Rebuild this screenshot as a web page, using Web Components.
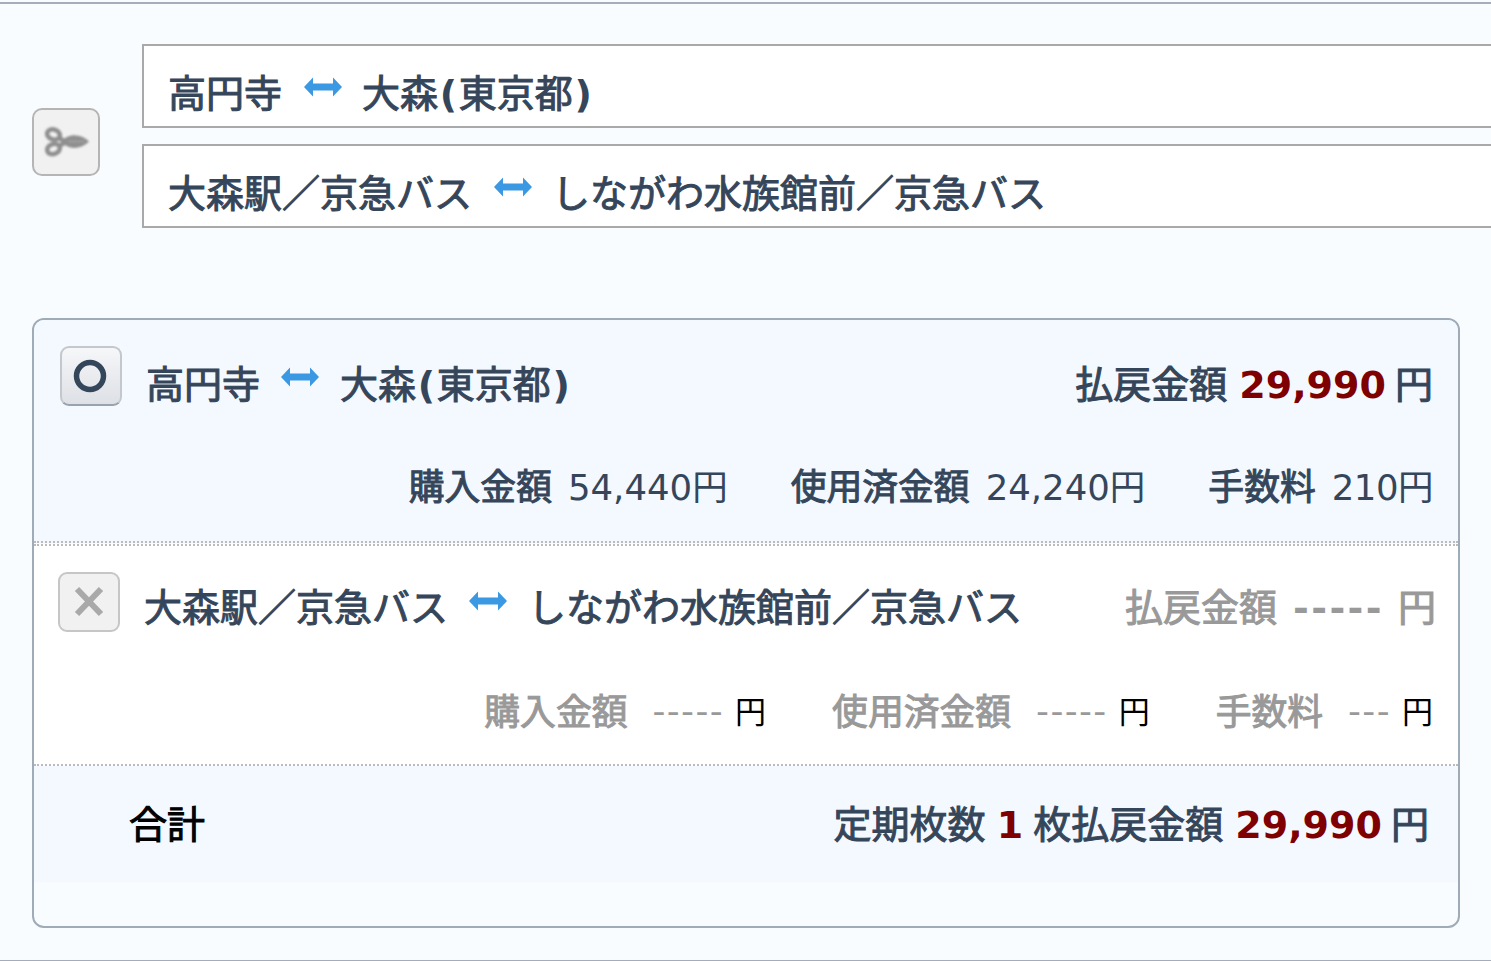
<!DOCTYPE html>
<html lang="ja">
<head>
<meta charset="utf-8">
<title>払戻</title>
<style>
    html, body { margin: 0; height: 100%; overflow: hidden; }
    body {
        background: #f9fcff;
        color: #36465a;
        font-family: "DejaVu Sans", "Noto Sans CJK JP", sans-serif;
    }
</style>
</head>
<body>
<refund-page>
    <route-select slot="routes">
        <route-box from="高円寺" to="大森" pref="東京都"></route-box>
        <route-box from="大森駅／京急バス" to="しながわ水族館前／京急バス"></route-box>
    </route-select>
    <refund-table slot="table">
        <refund-row from="高円寺" to="大森" pref="東京都" state="ok" amount="29,990"
            bought="54,440" used="24,240" fee="210"></refund-row>
        <refund-row from="大森駅／京急バス" to="しながわ水族館前／京急バス" state="ng"></refund-row>
        <refund-total count="1" amount="29,990"></refund-total>
    </refund-table>
</refund-page>

<script>
const arrowSvg = `<svg class="arrow" width="38" height="22" viewBox="0 0 38 22"><path fill="#3b98e2" d="M0 11 9 1.500V7.500H29V1.500L38 11 29 20.500V14.500H9V20.500Z"/></svg>`;

// shared route name markup: kanji + optional bold (prefecture)
function routeName(name, pref) {
    if (!pref) return name;
    return `${name}<b class="paren">(</b>${pref}<b class="paren">)</b>`;
}

class RefundPage extends HTMLElement {
    connectedCallback() {
        this.attachShadow({ mode: 'open' });
        this.shadowRoot.innerHTML = `
            <style>
                :host {
                    display: block;
                    box-sizing: border-box;
                    height: 961px;
                    border-top: 2px solid #a4adb9;
                    margin-top: 2px;
                    position: relative;
                }
                .bottom {
                    position: absolute;
                    left: 0; right: 0; bottom: 2px;
                    height: 1px;
                    background: #a4adb9;
                }
                .wrap { padding: 40px 0 0 32px; }
            </style>
            <div class="wrap">
                <slot name="routes"></slot>
                <slot name="table"></slot>
            </div>
            <div class="bottom"></div>
        `;
    }
}

class RouteSelect extends HTMLElement {
    connectedCallback() {
        this.attachShadow({ mode: 'open' });
        this.shadowRoot.innerHTML = `
            <style>
                :host { display: flex; align-items: center; gap: 42px; }
                .btn {
                    box-sizing: border-box;
                    width: 68px;
                    height: 68px;
                    flex: none;
                    margin-top: 12px;
                    border: 2px solid #b5b5b5;
                    border-radius: 10px;
                    background: #f1f1f1;
                    display: flex;
                    align-items: center;
                    justify-content: center;
                }
                .btn svg { filter: blur(0.8px); }
                .list {
                    flex: 1;
                    display: flex;
                    flex-direction: column;
                    gap: 16px;
                    margin-right: -10px;
                }
            </style>
            <div class="btn">
                <svg width="46" height="30" viewBox="0 0 46 30" fill="none">
                    <g stroke="#8f8f8f" stroke-width="4.500">
                        <ellipse cx="10.500" cy="7.500" rx="6.500" ry="5" transform="rotate(20 10.500 7.500)"/>
                        <ellipse cx="10.500" cy="22" rx="6.500" ry="5" transform="rotate(-20 10.500 22)"/>
                        <path d="M16 11 22 14.500M16 19 22 15.500"/>
                    </g>
                    <path fill="#8f8f8f" d="M19 14.500C24 6 38 6 46 14.500 38 23 24 23 19 14.500Z"/>
                    <path stroke="#aaa" stroke-width="1" d="M25 14.500H42"/>
                </svg>
            </div>
            <div class="list"><slot></slot></div>
        `;
    }
}

class RouteBox extends HTMLElement {
    connectedCallback() {
        const from = this.getAttribute('from');
        const to = this.getAttribute('to');
        const pref = this.getAttribute('pref');
        this.attachShadow({ mode: 'open' });
        this.shadowRoot.innerHTML = `
            <style>
                :host {
                    display: flex;
                    box-sizing: border-box;
                    height: 84px;
                    align-items: flex-end;
                    background: #fff;
                    border: 2px solid #a9a9a9;
                    padding: 0 0 5px 24px;
                    font-size: 38px;
                    font-weight: 400;
                    -webkit-text-stroke: 1px currentColor;
                    line-height: 54px;
                    white-space: nowrap;
                }
                .arrow { margin: 0 20px 0 22px; position: relative; top: -23px; }
                b { font-weight: 700; -webkit-text-stroke: 0; }
                .paren { padding: 0 1.700px; }
            </style>
            <span>${from}</span>${arrowSvg}<span>${routeName(to, pref)}</span>
        `;
    }
}

class RefundTable extends HTMLElement {
    connectedCallback() {
        this.attachShadow({ mode: 'open' });
        this.shadowRoot.innerHTML = `
            <style>
                :host {
                    display: block;
                    box-sizing: border-box;
                    width: 1428px;
                    height: 610px;
                    margin-top: 90px;
                    border: 2px solid #a0abb8;
                    border-radius: 12px;
                    overflow: hidden;
                }
            </style>
            <slot></slot>
        `;
    }
}

class RefundRow extends HTMLElement {
    connectedCallback() {
        const ok = this.getAttribute('state') === 'ok';
        const from = this.getAttribute('from');
        const to = this.getAttribute('to');
        const pref = this.getAttribute('pref');
        const amount = this.getAttribute('amount');
        const mark = ok
            ? `<svg width="36" height="36" viewBox="0 0 36 36"><circle cx="17" cy="18" r="13.500" fill="none" stroke="#34465a" stroke-width="5.500"/></svg>`
            : `<svg width="36" height="36" viewBox="0 0 36 36"><path d="M6 5 30 30M30 5 6 30" stroke="#a9a9a9" stroke-width="6"/></svg>`;
        const money = (label, val, dash) => ok
            ? `<span class="item"><span class="lbl">${label}</span><span class="val">${val}円</span></span>`
            : `<span class="item"><span class="lbl">${label}</span><span class="dash">${dash}</span><span class="yen">円</span></span>`;
        this.attachShadow({ mode: 'open' });
        this.shadowRoot.innerHTML = `
            <style>
                :host {
                    display: block;
                    box-sizing: border-box;
                    white-space: nowrap;
                }
                :host([state="ok"]) {
                    height: 223px;
                    background: #f3f9ff;
                    padding: 26px 25px 0 26px;
                    border-bottom: 2px dotted #bbb;
                }
                :host([state="ng"]) {
                    height: 222px;
                    margin-top: 1px;
                    background: #fff;
                    padding: 26px 22px 0 24px;
                    border-top: 2px dotted #bbb;
                    border-bottom: 2px dotted #bbb;
                }
                .top { display: flex; align-items: flex-start; }
                .mark {
                    box-sizing: border-box;
                    width: 62px;
                    height: 60px;
                    flex: none;
                    border-radius: 9px;
                    display: flex;
                    align-items: center;
                    justify-content: center;
                    margin-right: 24px;
                }
                :host([state="ok"]) .mark {
                    background: linear-gradient(#f6f7f9, #dde0e5);
                    border: 2px solid #c3c8cf;
                    border-bottom-color: #9aa2ad;
                }
                :host([state="ng"]) .mark {
                    background: #f1f1f1;
                    border: 2px solid #c6c6c6;
                }
                .name, .pay {
                    font-size: 38px;
                    -webkit-text-stroke: 1px currentColor;
                    line-height: 54px;
                    margin-top: 12px;
                }
                :host([state="ng"]) .name, :host([state="ng"]) .pay { margin-top: 9px; }
                .name { display: flex; flex: 1; }
                .arrow { margin: 0 21px; position: relative; top: 8px; }
                :host([state="ng"]) .arrow { top: 9px; }
                b { font-weight: 700; -webkit-text-stroke: 0; }
                .paren { padding: 0 1.700px; }
                .pay b { color: #7f0000; margin-right: -3px; }
                :host([state="ng"]) .pay { color: #999; }
                :host([state="ng"]) .pay b { color: #999; letter-spacing: 2.400px; margin: 0 2px 0 4px; }
                .detail {
                    display: flex;
                    justify-content: flex-end;
                    gap: 63px;
                    margin-top: 49px;
                    font-size: 35.800px;
                    line-height: 54px;
                }
                .lbl { -webkit-text-stroke: 1px currentColor; }
                .val { margin-left: 16px; font-size: 35.500px; }
                .item:last-child .val { letter-spacing: -0.500px; }
                :host([state="ng"]) .detail { gap: 66px; margin-right: 3px; }
                :host([state="ng"]) .lbl { color: #999; vertical-align: -1.500px; }
                .dash { color: #999; margin-left: 25px; letter-spacing: 1.400px; }
                .yen { color: #000; margin-left: 11px; font-size: 31px; }
            </style>
            <div class="top">
                <div class="mark">${mark}</div>
                <div class="name"><span>${from}</span>${arrowSvg}<span>${routeName(to, pref)}</span></div>
                <div class="pay">払戻金額 <b>${ok ? amount : '-----'}</b> 円</div>
            </div>
            <div class="detail">
                ${money('購入金額', this.getAttribute('bought'), '-----')}
                ${money('使用済金額', this.getAttribute('used'), '-----')}
                ${money('手数料', this.getAttribute('fee'), '---')}
            </div>
        `;
    }
}

class RefundTotal extends HTMLElement {
    connectedCallback() {
        this.attachShadow({ mode: 'open' });
        this.shadowRoot.innerHTML = `
            <style>
                :host {
                    display: flex;
                    box-sizing: border-box;
                    height: 116px;
                    align-items: center;
                    justify-content: space-between;
                    padding: 2px 29px 0 95px;
                    background: #f3f9ff;
                    font-size: 38px;
                    -webkit-text-stroke: 1px currentColor;
                    line-height: 54px;
                    white-space: nowrap;
                }
                .t { color: #000; }
                b { color: #7f0000; font-weight: 700; -webkit-text-stroke: 0; }
                .count { margin: 0 -2px 0 -1px; }
                .sum { margin-right: -3px; }
            </style>
            <span class="t">合計</span>
            <span>定期枚数 <b class="count">${this.getAttribute('count')}</b> 枚払戻金額 <b class="sum">${this.getAttribute('amount')}</b> 円</span>
        `;
    }
}

customElements.define('refund-page', RefundPage);
customElements.define('route-select', RouteSelect);
customElements.define('route-box', RouteBox);
customElements.define('refund-table', RefundTable);
customElements.define('refund-row', RefundRow);
customElements.define('refund-total', RefundTotal);
</script>
</body>
</html>
